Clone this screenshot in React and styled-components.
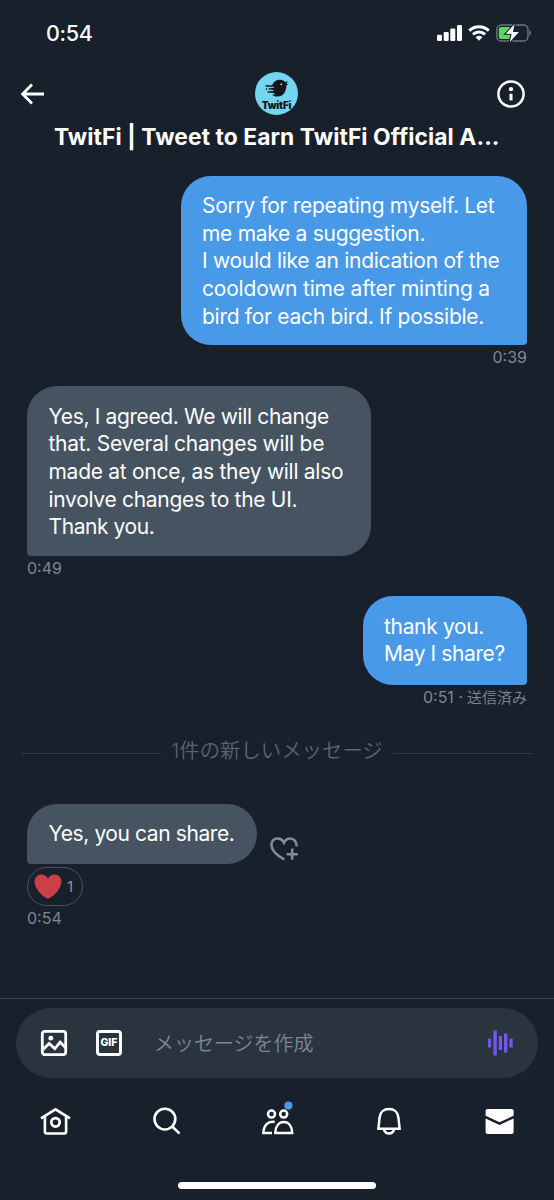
import React from "react";
import styled, { createGlobalStyle } from "styled-components";

const GlobalStyle = createGlobalStyle`
  * { box-sizing: border-box; }
  body {
    margin: 0;
    background: #18202b;
    font-family: Inter, "Noto Sans CJK JP", sans-serif;
    color: #fff;
  }
  svg { display: block; flex: none; overflow: visible; }
`;

const Screen = styled.div`
  display: flex;
  flex-direction: column;
  width: 554px;
  height: 1200px;
  overflow: hidden;
  background: #18202b;
`;

const StatusBar = styled.div`
  display: flex;
  align-items: center;
  justify-content: space-between;
  height: 67px;
  padding: 0 22px 1px 46px;
`;

const Clock = styled.div`
  font-size: 21.5px;
  font-weight: 500;
  letter-spacing: -0.3px;
`;

const StatusIcons = styled.div`
  display: flex;
  align-items: center;
  gap: 6px;
`;

const Header = styled.header`
  display: flex;
  flex-direction: column;
  height: 108.5px;
  padding-top: 5px;
`;

const HeaderRow = styled.div`
  display: flex;
  align-items: center;
  justify-content: space-between;
  height: 43px;
  padding: 0 28px 0 20px;
`;

const Title = styled.h1`
  margin: 7px 0 0;
  padding-left: 54px;
  font-size: 22.8px;
  line-height: 30px;
  font-weight: 700;
  letter-spacing: 0.08px;
  white-space: nowrap;
`;

const Avatar = styled.div`
  display: flex;
  flex-direction: column;
  align-items: center;
  width: 43px;
  height: 43px;
  margin-left: 11px;
  padding-top: 7px;
  border-radius: 50%;
  background: #74d5f1;
  color: #14161c;
`;

const AvatarName = styled.span`
  font-size: 10px;
  line-height: 14px;
  font-weight: 900;
  letter-spacing: -0.2px;
`;

const Thread = styled.main`
  display: flex;
  flex-direction: column;
  height: 822px;
`;

const Message = styled.section`
  display: flex;
  flex-direction: column;
  align-items: ${(p) => (p.$mine ? "flex-end" : "flex-start")};
  height: ${(p) => p.$height}px;
  padding: 0 27px;
`;

const BubbleRow = styled.div`
  display: flex;
  align-items: flex-end;
  gap: 12px;
`;

const Bubble = styled.div`
  width: ${(p) => p.$width}px;
  min-height: ${(p) => p.$minHeight || 0}px;
  padding: 16.8px 0 15.2px 21.5px;
  border-radius: 30px;
  border-bottom-right-radius: ${(p) => (p.$mine ? "4px" : "30px")};
  border-bottom-left-radius: ${(p) => (p.$mine ? "30px" : "4px")};
  background: ${(p) => (p.$mine ? "#4999e9" : "#465361")};
`;

const Line = styled.div`
  font-size: 21px;
  line-height: 27.6px;
  letter-spacing: ${(p) => p.$track}px;
  white-space: nowrap;
`;

const Stamp = styled.div`
  display: flex;
  align-items: baseline;
  gap: ${(p) => (p.$gap || 0)}px;
  height: 24px;
  font-size: 16px;
  line-height: 24px;
  color: #7f8794;
`;

const Sent = styled.span`
  font-size: 15px;
  font-weight: 350;
`;

const Divider = styled.div`
  display: flex;
  align-items: center;
  gap: 10.5px;
  height: 40px;
  margin: 21px 22px 33.5px;
  font-size: 20.4px;
  line-height: 30px;
  color: #5a6471;
  white-space: nowrap;
`;

const Rule = styled.span`
  flex: 1;
  height: 1px;
  margin-top: 7px;
  background: #323b46;
`;

const DividerText = styled.span`
  padding-top: 2px;
  font-weight: 350;
`;

const AddReaction = styled.div`
  padding-bottom: 2px;
`;

const Reaction = styled.div`
  display: flex;
  align-items: center;
  gap: 5px;
  width: 56px;
  height: 39px;
  margin-top: 3px;
  padding: 1px 0 0 6px;
  border: 1.5px solid #465361;
  border-radius: 20px;
  font-size: 15px;
  color: #8b94a1;
`;

const ComposerBar = styled.div`
  height: 80.5px;
  padding: 9px 16px 0;
  border-top: 1.5px solid #38414c;
`;

const Composer = styled.div`
  display: flex;
  align-items: center;
  height: 70px;
  padding: 0 24px;
  border-radius: 35px;
  background: #2a343f;
`;

const Placeholder = styled.span`
  flex: 1;
  font-size: 20px;
  font-weight: 350;
  color: #7d8792;
`;

const GifIcon = styled.span`
  display: flex;
  align-items: center;
  justify-content: center;
  width: 26px;
  height: 26px;
  margin: 0 32px 0 28px;
  border: 3px solid #fff;
  border-radius: 4px;
  font-size: 10.5px;
  font-weight: 800;
`;

const Nav = styled.nav`
  display: grid;
  grid-template-columns: repeat(5, 111px);
  align-items: center;
  justify-items: center;
  width: 554px;
  height: 86px;
`;

const HomeIndicator = styled.div`
  width: 198px;
  height: 7px;
  margin: 18px 0 0 178px;
  border-radius: 4px;
  background: #fff;
`;

function SignalIcon() {
  return (
    <svg width="25" height="16" viewBox="0 0 25 16" fill="#fff">
      <rect x="0" y="9.8" width="5" height="6.2" rx="1.2" />
      <rect x="6.7" y="7" width="5" height="9" rx="1.2" />
      <rect x="13.3" y="3.6" width="5" height="12.4" rx="1.2" />
      <rect x="20" y="0" width="5" height="16" rx="1.2" />
    </svg>
  );
}

function WifiIcon() {
  return (
    <svg width="22" height="16" viewBox="0 0 22 16" fill="none" stroke="#fff" strokeWidth="3">
      <path d="M1.2 5.6C6.8.3 15.2.3 20.8 5.6" />
      <path d="M4.9 9.4C8.5 6.1 13.5 6.1 17.1 9.4" />
      <path d="M7.6 12.2C9.6 10.4 12.4 10.4 14.4 12.2L11 15.8Z" fill="#fff" stroke="none" />
    </svg>
  );
}

function BatteryIcon() {
  return (
    <svg width="36" height="18" viewBox="0 0 36 18">
      <rect x="0.8" y="1" width="31.2" height="16" rx="4.6" fill="none" stroke="#6e747d" strokeWidth="1.4" />
      <path d="M33.4 6.2c2.2.8 2.2 4.8 0 5.6z" fill="#6e747d" />
      <rect x="2.8" y="3" width="12.5" height="12" rx="2.6" fill="#62d467" />
      <path d="M18.6 0L9.8 9.7h5.8L13.8 18l9.1-10h-6z" fill="#fff" stroke="#18202b" strokeWidth="2.2" paintOrder="stroke" />
    </svg>
  );
}

function BackIcon() {
  return (
    <svg width="26" height="24" viewBox="0 0 26 24" fill="none" stroke="#fff" strokeWidth="2.8">
      <path d="M24 12H3M12 2.6L2.6 12l9.4 9.4" />
    </svg>
  );
}

function InfoIcon() {
  return (
    <svg width="30" height="30" viewBox="0 0 30 30" fill="none" stroke="#fff">
      <circle cx="15" cy="15" r="12.6" strokeWidth="2.5" />
      <circle cx="15" cy="10.2" r="2.1" fill="#fff" stroke="none" />
      <path d="M15 14.8v6.6" strokeWidth="3" />
    </svg>
  );
}

function BirdIcon() {
  return (
    <svg width="26" height="19" viewBox="0 0 26 19">
      <path
        d="M8 7C9 2.6 12.6.8 16 .8c2.5 0 4.3 1 5.2 2.5L23.8 2l-1.4 3 1.9-.2-2 2C22.3 13 19 17.6 13.7 17.6c-2.8 0-4.4-.9-5.7-1.8l3.6-.6-5.6-3 4-.2-3.5-3.2 4 .2z"
        fill="#14161c"
      />
      <circle cx="17.3" cy="5.2" r="1" fill="#74d5f1" />
      <path d="M1.5 7h7M4.5 10h4M1.8 10h1.2M3.6 13h5" stroke="#14161c" strokeWidth="1.5" />
    </svg>
  );
}

function AddHeartIcon() {
  return (
    <svg width="30" height="26" viewBox="0 0 30 26" fill="none" stroke="#848d9a" strokeWidth="2.5">
      <path d="M15.3 23.5C6.6 18.5 2.4 13.6 2.4 9 2.4 5 5.2 2.4 8.7 2.4c2.8 0 4.9 1.5 6.2 4.3 1.3-2.8 3.4-4.3 6.2-4.3 4 0 6.7 3.2 6.3 8" />
      <path d="M23.2 12.6v11.2M17.6 18.2h11.2" />
    </svg>
  );
}

function HeartIcon() {
  return (
    <svg width="28" height="25" viewBox="0 0 28 25">
      <path
        d="M14 24.6C12 24.6.6 16.6.6 7.7.6 3.3 3.5.4 7.2.4c3 0 5.4 1.4 6.8 4.2C15.4 1.8 17.8.4 20.8.4c3.7 0 6.6 2.9 6.6 7.3 0 8.9-11.4 16.9-13.4 16.9z"
        fill="#cb3f49"
      />
    </svg>
  );
}

function PhotoIcon() {
  return (
    <svg width="28" height="28" viewBox="0 0 28 28" fill="none" stroke="#fff" strokeWidth="2.8">
      <rect x="2.3" y="2.3" width="23.4" height="23.4" rx="2.6" />
      <path d="M3 20.4l6.2-6 5.6 5.4 5.4-6.6 5.2 5.4" />
      <circle cx="10.8" cy="9.2" r="2.4" fill="#fff" stroke="none" />
    </svg>
  );
}

function VoiceIcon() {
  return (
    <svg width="26" height="26" viewBox="0 0 26 26" fill="#7356ee">
      <rect x="0" y="8.6" width="3.2" height="8.8" />
      <rect x="5.4" y="0.5" width="3.4" height="25" />
      <rect x="10.8" y="6" width="3.2" height="14" />
      <rect x="16" y="3.4" width="3.4" height="19.2" />
      <rect x="21.5" y="8.6" width="3.2" height="8.8" />
    </svg>
  );
}

function HomeIcon() {
  return (
    <svg width="33" height="30" viewBox="0 0 33 30" fill="none" stroke="#fff" strokeWidth="2.6">
      <path d="M2 12.4L16.5 3.4l14.5 9" />
      <path d="M5.9 11v14.6c0 1.2.7 1.9 1.9 1.9h17.4c1.2 0 1.9-.7 1.9-1.9V11" />
      <circle cx="16.5" cy="16.3" r="4.2" strokeWidth="2.8" />
    </svg>
  );
}

function SearchIcon() {
  return (
    <svg width="30" height="30" viewBox="0 0 30 30" fill="none" stroke="#fff" strokeWidth="2.6">
      <circle cx="12.9" cy="13.1" r="10.4" />
      <path d="M20.3 20.5l7.2 7.2" />
    </svg>
  );
}

function PeopleIcon() {
  return (
    <svg width="34" height="30" viewBox="0.3 7.8 34 30" fill="none" stroke="#fff" strokeWidth="2.5">
      <circle cx="10.8" cy="15.9" r="3.5" />
      <circle cx="23" cy="15.9" r="3.5" />
      <path d="M14 23.8c-6.5-1.6-11.2 3.400-11.300 10.900h8.600" />
      <path d="M14.600 34.700h16.900c-.2-6.700-3.500-10.900-8.400-10.900s-8.300 4.200-8.500 10.900z" />
      <circle cx="27.7" cy="7.4" r="4.1" fill="#4999e9" stroke="none" />
    </svg>
  );
}

function BellIcon() {
  return (
    <svg width="28" height="30" viewBox="0 0 28 30" fill="none" stroke="#fff" strokeWidth="2.5">
      <path d="M3.4 22.7L4.6 11.4C5.1 6 9 3 14 3s8.9 3 9.4 8.4l1.2 11.3z" />
      <path d="M9 23.6c.8 2.7 2.6 3.900 5 3.900s4.200-1.200 5-3.900" />
    </svg>
  );
}

function MailIcon() {
  return (
    <svg width="30" height="28" viewBox="0.4 -0.4 30 28" fill="#fff">
      <path d="M1 3.7C1 2.2 1.7 1.5 3.2 1.5h23.6c1.5 0 2.2.7 2.2 2.2v4.6L15 14.9 1 8.3z" />
      <path d="M1 11l14 6.6L29 11v13.4c0 1.5-.7 2.2-2.2 2.2H3.2c-1.5 0-2.2-.7-2.2-2.2z" />
    </svg>
  );
}

const suggestion = [
  ["Sorry for repeating myself. Let", -0.3],
  ["me make a suggestion.", -0.29],
  ["I would like an indication of the", -0.28],
  ["cooldown time after minting a", -0.2],
  ["bird for each bird. If possible.", -0.28],
];

const answer = [
  ["Yes, I agreed. We will change", -0.36],
  ["that. Several changes will be", -0.28],
  ["made at once, as they will also", -0.28],
  ["involve changes to the UI.", -0.3],
  ["Thank you.", -0.42],
];

const question = [
  ["thank you.", -0.33],
  ["May I share?", -0.4],
];

const consent = [["Yes, you can share.", -0.41]];

function ChatBubble({ lines, width, mine, minHeight }) {
  return (
    <Bubble $width={width} $mine={mine} $minHeight={minHeight}>
      {lines.map(([text, track]) => (
        <Line key={text} $track={track}>{text}</Line>
      ))}
    </Bubble>
  );
}

export default function App() {
  return (
    <Screen>
      <GlobalStyle />
      <StatusBar>
        <Clock>0:54</Clock>
        <StatusIcons>
          <SignalIcon />
          <WifiIcon />
          <BatteryIcon />
        </StatusIcons>
      </StatusBar>
      <Header>
        <HeaderRow>
          <BackIcon />
          <Avatar>
            <BirdIcon />
            <AvatarName>TwitFi</AvatarName>
          </Avatar>
          <InfoIcon />
        </HeaderRow>
        <Title>TwitFi | Tweet to Earn TwitFi Official A...</Title>
      </Header>
      <Thread>
        <Message $mine $height={210.5}>
          <ChatBubble mine lines={suggestion} width={346.5} />
          <Stamp>0:39</Stamp>
        </Message>
        <Message $height={210}>
          <ChatBubble lines={answer} width={343.5} />
          <Stamp>0:49</Stamp>
        </Message>
        <Message $mine $height={113}>
          <ChatBubble mine lines={question} width={164.5} minHeight={88.5} />
          <Stamp $gap={4}>
            <span>0:51 ·</span>
            <Sent>送信済み</Sent>
          </Stamp>
        </Message>
        <Divider>
          <Rule />
          <DividerText>1件の新しいメッセージ</DividerText>
          <Rule />
        </Divider>
        <Message $height={130}>
          <BubbleRow>
            <ChatBubble lines={consent} width={230} minHeight={60} />
            <AddReaction>
              <AddHeartIcon />
            </AddReaction>
          </BubbleRow>
          <Reaction>
            <HeartIcon />
            <span>1</span>
          </Reaction>
          <Stamp>0:54</Stamp>
        </Message>
      </Thread>
      <ComposerBar>
        <Composer>
          <PhotoIcon />
          <GifIcon>GIF</GifIcon>
          <Placeholder>メッセージを作成</Placeholder>
          <VoiceIcon />
        </Composer>
      </ComposerBar>
      <Nav>
        <HomeIcon />
        <SearchIcon />
        <PeopleIcon />
        <BellIcon />
        <MailIcon />
      </Nav>
      <HomeIndicator />
    </Screen>
  );
}
